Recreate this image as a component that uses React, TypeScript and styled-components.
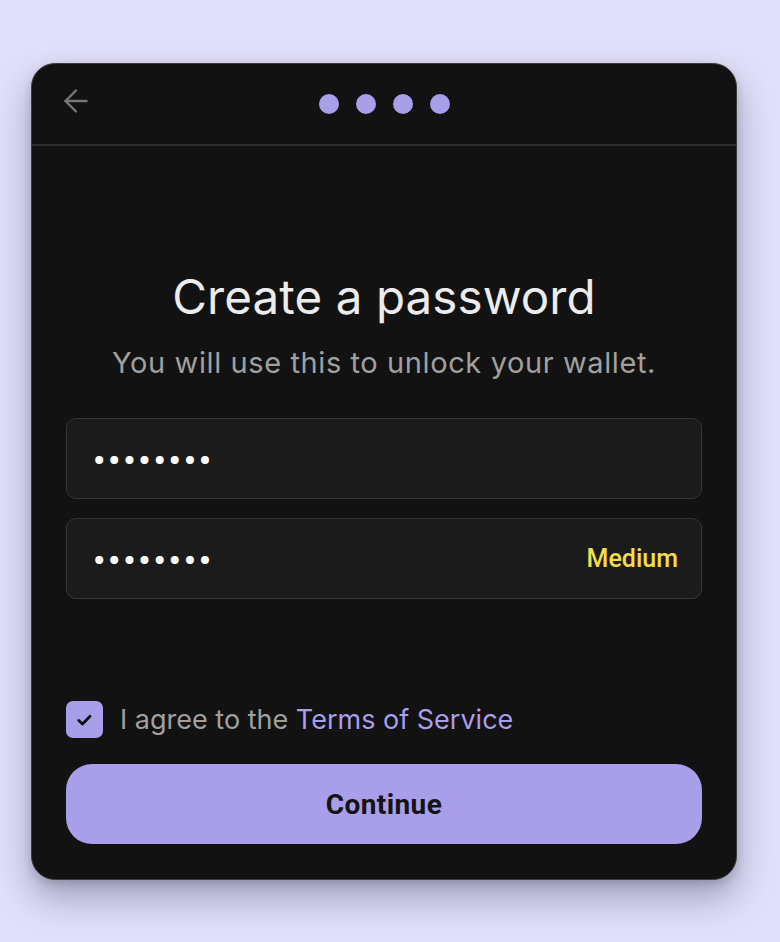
import React from "react";
import styled, { createGlobalStyle } from "styled-components";
import { ArrowLeft } from "lucide-react";

const GlobalStyle = createGlobalStyle`
  html, body {
    margin: 0;
    padding: 0;
    background: #e2dffa;
  }
  body {
    font-family: Inter, "Noto Sans", sans-serif;
  }
`;

const Page = styled.div`
  min-height: 942px;
  padding: 63px 0 0 31px;
  box-sizing: border-box;
`;

const Card = styled.div`
  width: 706px;
  height: 817px;
  box-sizing: border-box;
  background: #121212;
  border: 1px solid #3c3c3c;
  border-radius: 24px;
  box-shadow: 0 18px 36px rgba(40, 36, 70, 0.35), 0 4px 10px rgba(0, 0, 0, 0.15);
  display: flex;
  flex-direction: column;
  overflow: hidden;
`;

const Header = styled.div`
  height: 80px;
  flex-shrink: 0;
  display: flex;
  align-items: center;
  justify-content: center;
  position: relative;
  border-bottom: 2px solid #2e2e2e;
`;

const BackButton = styled.button`
  position: absolute;
  left: 26px;
  top: 19px;
  background: none;
  border: none;
  padding: 0;
  color: #767676;
  display: flex;
  cursor: pointer;
`;

const Steps = styled.div`
  display: flex;
  gap: 17px;
  margin-left: 1px;
`;

const Step = styled.span`
  width: 20px;
  height: 20px;
  border-radius: 50%;
  background: #a89eea;
`;

const Body = styled.div`
  flex: 1;
  display: flex;
  flex-direction: column;
  padding: 0 34px 35px;
`;

const Title = styled.h1`
  margin: 123px 0 0;
  text-align: center;
  font-size: 47.5px;
  font-weight: 400;
  line-height: 56px;
  color: #ececec;
  letter-spacing: 0.1px;
`;

const Subtitle = styled.p`
  margin: 19px 0 0;
  text-align: center;
  font-size: 29px;
  letter-spacing: 0.6px;
  line-height: 38px;
  color: #a0a0a0;
`;

const Fields = styled.div`
  display: flex;
  flex-direction: column;
  gap: 19px;
  margin-top: 36px;
`;

const Field = styled.div`
  height: 81px;
  box-sizing: border-box;
  display: flex;
  align-items: center;
  justify-content: space-between;
  padding: 0 23px 0 26px;
  background: #1b1b1b;
  border: 1px solid #353535;
  border-radius: 10px;
`;

const Dots = styled.span`
  font-family: Roboto, "Liberation Sans", sans-serif;
  font-size: 34px;
  line-height: 34px;
  letter-spacing: 2.9px;
  color: #ffffff;
  font-weight: 700;
  padding-top: 3px;
`;

const Strength = styled.span<{ $color: string }>`
  font-family: Roboto, "Liberation Sans", sans-serif;
  font-size: 25px;
  font-weight: 500;
  color: ${(p) => p.$color};
`;

const Spacer = styled.div`
  flex: 1;
`;

const AgreeRow = styled.label`
  display: flex;
  align-items: center;
  gap: 17px;
  font-size: 27px;
  color: #a0a0a0;
  margin-bottom: 26px;
`;

const Check = styled.span`
  width: 37px;
  height: 37px;
  border-radius: 7px;
  background: #a89eea;
  display: flex;
  align-items: center;
  justify-content: center;
`;

const Link = styled.a`
  color: #a89eea;
  text-decoration: none;
`;

const Button = styled.button`
  height: 80px;
  border: none;
  border-radius: 26px;
  background: #a89eea;
  color: #141414;
  font-family: Roboto, "Liberation Sans", sans-serif;
  font-size: 28px;
  font-weight: 700;
  letter-spacing: 0.4px;
  cursor: pointer;
`;

export default function App() {
  return (
    <>
      <GlobalStyle />
      <Page>
        <Card>
          <Header>
            <BackButton aria-label="Back">
              <ArrowLeft size={36} strokeWidth={1.6} />
            </BackButton>
            <Steps>
              {[0, 1, 2, 3].map((i) => (
                <Step key={i} />
              ))}
            </Steps>
          </Header>
          <Body>
            <Title>Create a password</Title>
            <Subtitle>You will use this to unlock your wallet.</Subtitle>
            <Fields>
              <Field>
                <Dots>••••••••</Dots>
              </Field>
              <Field>
                <Dots>••••••••</Dots>
                <Strength $color="#f4dc4c">Medium</Strength>
              </Field>
            </Fields>
            <Spacer />
            <AgreeRow>
              <Check>
                <svg width="15" height="12" viewBox="0 0 15 12" fill="none">
                  <path
                    d="M1.8 6.5 L5.5 10 L13 2.2"
                    stroke="#111"
                    strokeWidth="2.8"
                    strokeLinecap="round"
                    strokeLinejoin="round"
                  />
                </svg>
              </Check>
              <span>
                I agree to the <Link href="#">Terms of Service</Link>
              </span>
            </AgreeRow>
            <Button>Continue</Button>
          </Body>
        </Card>
      </Page>
    </>
  );
}
